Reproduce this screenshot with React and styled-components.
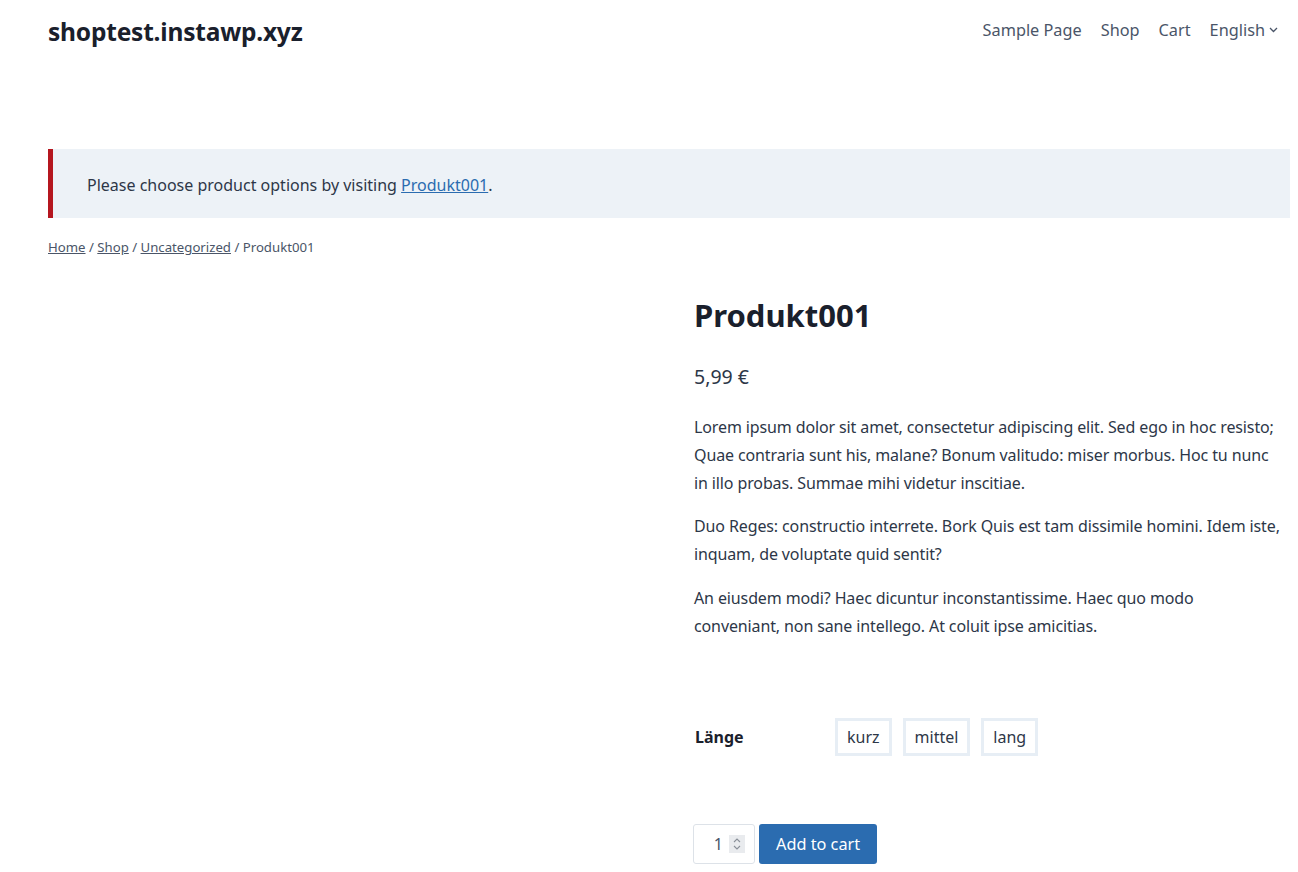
import React from "react";
import styled, { createGlobalStyle } from "styled-components";

const Global = createGlobalStyle`
  html, body { margin: 0; padding: 0; background: #fff; }
  body {
    font-family: "Noto Sans", "Open Sans", sans-serif;
    color: #2d3748;
    -webkit-font-smoothing: antialiased;
  }
  * { box-sizing: border-box; }
`;

const Header = styled.header`
  display: flex;
  align-items: center;
  justify-content: space-between;
  height: 60px;
  padding: 0 20px 0 48px;
`;

const SiteTitle = styled.div`
  font-size: 24.5px;
  font-weight: 700;
  color: #1a202c;
  letter-spacing: -0.2px;
  margin-top: 2px;
`;

const Nav = styled.nav`
  display: flex;
  align-items: center;
  gap: 19px;
  font-size: 16.3px;
  color: #4a5568;
`;

const NavItem = styled.span`
  display: inline-flex;
  align-items: center;
  gap: 4px;
`;

const Main = styled.main`
  padding: 89px 8px 0 48px;
`;

const Notice = styled.div`
  background: #edf2f7;
  border-left: 5px solid #b5161f;
  height: 69px;
  display: flex;
  align-items: center;
  padding-left: 34px;
  padding-top: 2px;
  font-size: 16px;
  color: #2d3748;
`;

const Link = styled.a`
  color: #2b6cb0;
  text-decoration: underline;
`;

const Crumbs = styled.div`
  margin-top: 20px;
  font-size: 13.2px;
  color: #4a5568;
  line-height: 18px;
`;

const CrumbLink = styled.a`
  color: #4a5568;
  text-decoration: underline;
`;

const Product = styled.div`
  display: grid;
  grid-template-columns: 646px 1fr;
  margin-top: 35px;
`;

const Gallery = styled.div``;

const Summary = styled.div`
  padding-right: 9px;
`;

const Title = styled.h1`
  margin: 0;
  font-size: 31px;
  line-height: 48px;
  font-weight: 700;
  color: #1a202c;
`;

const Price = styled.p`
  margin: 24px 0 0;
  font-size: 19.5px;
  line-height: 28px;
  color: #2d3748;
`;

const Text = styled.p`
  margin: ${(p) => (p.$first ? "23px" : "16px")} 0 0;
  font-size: 16px;
  letter-spacing: -0.12px;
  line-height: 27.8px;
  color: #2d3748;
`;

const Variations = styled.div`
  display: flex;
  align-items: center;
  margin-top: 76px;
  height: 40px;
`;

const Label = styled.div`
  width: 141px;
  padding-left: 1px;
  font-size: 16px;
  font-weight: 700;
  color: #1a202c;
`;

const Swatches = styled.div`
  display: flex;
  gap: 11px;
`;

const Swatch = styled.div`
  height: 38px;
  padding: 0 9px;
  border: 3px solid #e7eef5;
  display: flex;
  align-items: center;
  font-size: 16px;
  color: #2d3748;
`;

const CartRow = styled.div`
  display: flex;
  gap: 4px;
  margin-top: 67px;
  margin-left: -1px;
`;

const Qty = styled.div`
  width: 62px;
  height: 40px;
  border: 1px solid #dde2e8;
  border-radius: 3px;
  display: flex;
  align-items: center;
  justify-content: flex-end;
  padding-right: 9px;
  gap: 6px;
  font-size: 16px;
  color: #4a5568;
`;

const Spinner = styled.span`
  width: 16px;
  height: 18px;
  background: #e9ebee;
  display: flex;
  align-items: center;
  justify-content: center;
`;

const CartButton = styled.button`
  height: 40px;
  padding: 0 17px;
  border: none;
  border-radius: 3px;
  background: #2b6cb0;
  color: #fff;
  font-family: inherit;
  font-size: 16.3px;
`;

export default function App() {
  return (
    <>
      <Global />
      <Header>
        <SiteTitle>shoptest.instawp.xyz</SiteTitle>
        <Nav>
          <NavItem>Sample Page</NavItem>
          <NavItem>Shop</NavItem>
          <NavItem>Cart</NavItem>
          <NavItem>
            English
            <svg width="9" height="6" viewBox="0 0 9 6" fill="none">
              <path d="M1 1l3.5 3.5L8 1" stroke="#4a5568" strokeWidth="1.3" />
            </svg>
          </NavItem>
        </Nav>
      </Header>
      <Main>
        <Notice>
          <span>
            Please choose product options by visiting <Link>Produkt001</Link>.
          </span>
        </Notice>
        <Crumbs>
          <CrumbLink>Home</CrumbLink> / <CrumbLink>Shop</CrumbLink> /{" "}
          <CrumbLink>Uncategorized</CrumbLink> / Produkt001
        </Crumbs>
        <Product>
          <Gallery />
          <Summary>
            <Title>Produkt001</Title>
            <Price>5,99 €</Price>
            <Text $first>
              Lorem ipsum dolor sit amet, consectetur adipiscing elit. Sed ego in hoc resisto;
              Quae contraria sunt his, malane? Bonum valitudo: miser morbus. Hoc tu nunc in
              illo probas. Summae mihi videtur inscitiae.
            </Text>
            <Text>
              Duo Reges: constructio interrete. Bork Quis est tam dissimile homini. Idem iste,
              inquam, de voluptate quid sentit?
            </Text>
            <Text>
              An eiusdem modi? Haec dicuntur inconstantissime. Haec quo modo conveniant, non
              sane intellego. At coluit ipse amicitias.
            </Text>
            <Variations>
              <Label>Länge</Label>
              <Swatches>
                <Swatch>kurz</Swatch>
                <Swatch>mittel</Swatch>
                <Swatch>lang</Swatch>
              </Swatches>
            </Variations>
            <CartRow>
              <Qty>
                1
                <Spinner>
                  <svg width="8" height="14" viewBox="0 0 8 14" fill="none">
                    <path d="M1 5l3-3 3 3M1 9l3 3 3-3" stroke="#8a9099" strokeWidth="1.1" />
                  </svg>
                </Spinner>
              </Qty>
              <CartButton>Add to cart</CartButton>
            </CartRow>
          </Summary>
        </Product>
      </Main>
    </>
  );
}
